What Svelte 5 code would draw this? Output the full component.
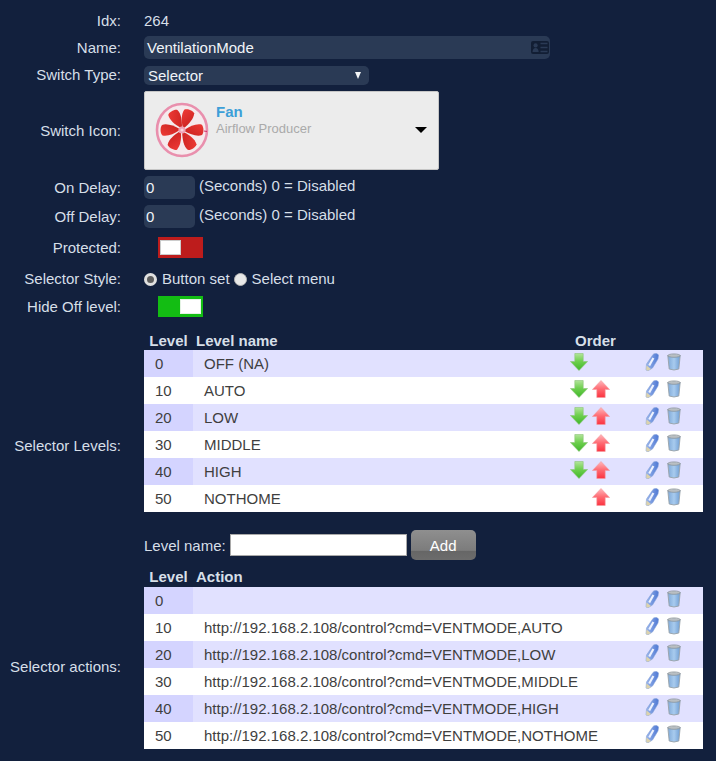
<script>
	const levels = [
		{ level: 0, name: "OFF (NA)", down: true, up: false },
		{ level: 10, name: "AUTO", down: true, up: true },
		{ level: 20, name: "LOW", down: true, up: true },
		{ level: 30, name: "MIDDLE", down: true, up: true },
		{ level: 40, name: "HIGH", down: true, up: true },
		{ level: 50, name: "NOTHOME", down: false, up: true }
	];
	const actions = [
		{ level: 0, action: "" },
		{ level: 10, action: "http://192.168.2.108/control?cmd=VENTMODE,AUTO" },
		{ level: 20, action: "http://192.168.2.108/control?cmd=VENTMODE,LOW" },
		{ level: 30, action: "http://192.168.2.108/control?cmd=VENTMODE,MIDDLE" },
		{ level: 40, action: "http://192.168.2.108/control?cmd=VENTMODE,HIGH" },
		{ level: 50, action: "http://192.168.2.108/control?cmd=VENTMODE,NOTHOME" }
	];
	const blades = [-27, 22, 90, 150, 210, 270];
</script>

{#snippet arrow(dir)}
	<svg class="arrow" class:flip={dir === "up"} width="18" height="18" viewBox="0 0 18 18">
		<path
			d="M4.8 0.5 H13.2 V8.5 H17.6 L9 17.5 L0.4 8.5 H4.8 Z"
			fill="url(#{dir === 'up' ? 'gradUp' : 'gradDown'})"
			stroke={dir === "up" ? "#f49aa0" : "#8cc478"}
			stroke-width="0.6"
		/>
	</svg>
{/snippet}

{#snippet tools()}
	<div class="tools">
		<svg class="pen" width="14" height="18" viewBox="0 0 14 18">
			<path d="M8 1.5 C9.5 0 13 0 13.5 2.5 L13 6 L7.5 15 L3 17.8 L1 17 L1.5 11 Z" fill="url(#gradPen)" stroke="#86a2d8" stroke-width="0.6" />
			<path d="M8.4 5 L4.2 12.5" stroke="#eef3ff" stroke-width="2.2" />
			<path d="M1.5 12.5 L1.2 17 L3 17.8 L6 16 Z" fill="#dcd3ae" />
		</svg>
		<svg class="bin" width="14" height="18" viewBox="0 0 14 18">
			<path d="M0.8 2.5 L13.2 2.5 L11.8 16 Q7 18 2.2 16 Z" fill="url(#gradBin)" stroke="#9aa3a8" stroke-width="0.9" />
			<ellipse cx="7" cy="2.6" rx="6.2" ry="1.7" fill="#b9bfc3" stroke="#858e93" stroke-width="0.7" />
		</svg>
	</div>
{/snippet}

<svg class="defs" width="0" height="0">
	<defs>
		<linearGradient id="gradDown" x1="0" y1="0" x2="0" y2="1">
			<stop offset="0" stop-color="#b2e49a" />
			<stop offset="0.45" stop-color="#6fd04f" />
			<stop offset="1" stop-color="#3fb62a" />
		</linearGradient>
		<linearGradient id="gradUp" x1="0" y1="1" x2="0" y2="0">
			<stop offset="0" stop-color="#ffb8bc" />
			<stop offset="0.5" stop-color="#ff6a72" />
			<stop offset="1" stop-color="#fb3340" />
		</linearGradient>
		<linearGradient id="gradPen" x1="0" y1="0" x2="1" y2="0">
			<stop offset="0" stop-color="#9db8ec" />
			<stop offset="1" stop-color="#4e78d4" />
		</linearGradient>
		<linearGradient id="gradBin" x1="0" y1="0" x2="1" y2="0">
			<stop offset="0" stop-color="#7fa9d8" />
			<stop offset="0.5" stop-color="#a8cbee" />
			<stop offset="1" stop-color="#6f9ed4" />
		</linearGradient>
		<linearGradient id="gradBlade" x1="0" y1="0" x2="1" y2="1">
			<stop offset="0" stop-color="#ee3a36" />
			<stop offset="1" stop-color="#c9211f" />
		</linearGradient>
	</defs>
</svg>

<div class="page">
	<div class="row idx">
		<div class="label">Idx:</div>
		<div class="value">264</div>
	</div>

	<div class="row name">
		<div class="label">Name:</div>
		<div class="field wide">
			VentilationMode
			<svg class="card" width="18" height="13" viewBox="0 0 18 13">
				<rect width="18" height="13" rx="2" fill="#121e34" />
				<circle cx="4.6" cy="4.4" r="2.1" fill="#2a3a55" />
				<path d="M1.5 11 Q1.8 7 4.6 7 Q7.4 7 7.7 11 Z" fill="#2a3a55" />
				<path d="M9.5 2.5 H16.5 M9.5 6.5 H16.5 M9.5 10.5 H16.5" stroke="#2a3a55" stroke-width="1.6" />
			</svg>
		</div>
	</div>

	<div class="row type">
		<div class="label">Switch Type:</div>
		<div class="field select">
			Selector
			<span class="caret"></span>
		</div>
	</div>

	<div class="row icon">
		<div class="label">Switch Icon:</div>
		<div class="iconbox">
			<svg class="fan" width="54" height="56" viewBox="-27 -28 54 56">
				<ellipse cx="0" cy="0" rx="25" ry="26" fill="#f5eaed" stroke="#e98fad" stroke-width="2.6" />
				{#each blades as b}
					<path
						transform="rotate({b})"
						d="M-0.5 -3 C-4 -8 -6.5 -14 -5.5 -19.5 C-3.5 -22 3 -22 5 -20 C7 -15 4 -8 1.5 -3 Z"
						fill="url(#gradBlade)"
					/>
				{/each}
				<path d="M22 1 L25 1.5" stroke="#d0306a" stroke-width="1.2" />
				<circle r="3.6" fill="#f0a0b4" />
				<circle r="1.6" fill="#f8d3dc" />
			</svg>
			<div class="icontext">
				<div class="iconname">Fan</div>
				<div class="icondesc">Airflow Producer</div>
			</div>
			<span class="iconcaret"></span>
		</div>
	</div>

	<div class="row delay">
		<div class="label">On Delay:</div>
		<div class="field small">0</div>
		<div class="hint">(Seconds) 0 = Disabled</div>
	</div>

	<div class="row delay">
		<div class="label">Off Delay:</div>
		<div class="field small">0</div>
		<div class="hint">(Seconds) 0 = Disabled</div>
	</div>

	<div class="row toggle-row first">
		<div class="label">Protected:</div>
		<div class="toggle off"><span class="knob"></span></div>
	</div>

	<div class="row style">
		<div class="label">Selector Style:</div>
		<div class="radios">
			<span class="radio checked"></span>
			<span>Button set</span>
			<span class="radio second"></span>
			<span>Select menu</span>
		</div>
	</div>

	<div class="row toggle-row">
		<div class="label">Hide Off level:</div>
		<div class="toggle on"><span class="knob"></span></div>
	</div>

	<div class="row tables">
		<div class="label">Selector Levels:</div>
		<div class="tablewrap">
			<div class="thead">
				<span class="c-level">Level</span>
				<span class="c-name">Level name</span>
				<span class="c-order">Order</span>
			</div>
			{#each levels as l, i}
				<div class="tr" class:odd={i % 2 === 0}>
					<div class="c-level cell">{l.level}</div>
					<div class="c-name cell">{l.name}</div>
					<div class="c-order cell">
						<span class="slot">{#if l.down}{@render arrow("down")}{/if}</span>
						<span class="slot">{#if l.up}{@render arrow("up")}{/if}</span>
					</div>
					{@render tools()}
				</div>
			{/each}
			<div class="adder">
				<span>Level name:</span>
				<div class="textbox"></div>
				<div class="btn">Add</div>
			</div>
		</div>
	</div>

	<div class="row tables">
		<div class="label">Selector actions:</div>
		<div class="tablewrap last">
			<div class="thead tall">
				<span class="c-level">Level</span>
				<span class="c-name">Action</span>
			</div>
			{#each actions as a, i}
				<div class="tr" class:odd={i % 2 === 0}>
					<div class="c-level cell">{a.level}</div>
					<div class="c-action cell">{a.action}</div>
					{@render tools()}
				</div>
			{/each}
		</div>
	</div>
</div>

<style>
	:global(body) {
		margin: 0;
		background: #12203d;
	}
	.defs {
		position: absolute;
	}
	.page {
		height: 761px;
		box-sizing: border-box;
		overflow: hidden;
		padding-top: 11px;
		font-family: "Liberation Sans", Arial, sans-serif;
		font-size: 15px;
		color: #d6dfe8;
	}
	.row {
		display: grid;
		grid-template-columns: 121px auto 1fr;
		column-gap: 23px;
		align-items: center;
	}
	.label {
		text-align: right;
	}
	.idx {
		height: 19px;
		margin-bottom: 6px;
	}
	.name {
		height: 23px;
		margin-bottom: 7px;
	}
	.type {
		height: 19px;
		margin-bottom: 6px;
	}
	.type .label {
		margin-top: -2px;
	}
	.icon {
		height: 79px;
		margin-bottom: 6px;
	}
	.delay {
		height: 23px;
		margin-bottom: 6px;
	}
	.delay .hint {
		margin-left: -19px;
		margin-top: -4px;
	}
	.field {
		box-sizing: border-box;
		background: #2a3a55;
		border-radius: 5px;
		color: #f0f4f8;
		display: flex;
		align-items: center;
		padding-left: 3px;
	}
	.wide {
		width: 406px;
		height: 23px;
		justify-content: space-between;
		padding-right: 1px;
	}
	.select {
		width: 225px;
		height: 19px;
		padding-left: 4px;
		justify-content: space-between;
		padding-right: 8px;
	}
	.caret {
		width: 0;
		height: 0;
		border-left: 3.5px solid transparent;
		border-right: 3.5px solid transparent;
		border-top: 7px solid #f4f6f8;
	}
	.small {
		width: 51px;
		height: 23px;
		padding-left: 2px;
	}
	.iconbox {
		box-sizing: border-box;
		width: 295px;
		height: 79px;
		background: #ececec;
		border: 1px solid #c6c6c6;
		border-radius: 2px;
		display: flex;
		align-items: flex-start;
		padding: 10px 12px 0 10px;
		position: relative;
	}
	.fan {
		flex: none;
	}
	.icontext {
		margin-left: 7px;
		line-height: 17px;
		margin-top: 1px;
	}
	.iconname {
		color: #3d9fd8;
		font-weight: bold;
		font-size: 15px;
	}
	.icondesc {
		color: #aaaaaa;
		font-size: 13px;
	}
	.iconcaret {
		position: absolute;
		right: 11px;
		top: 35px;
		width: 0;
		height: 0;
		border-left: 6px solid transparent;
		border-right: 6px solid transparent;
		border-top: 6px solid #000;
	}
	.toggle-row {
		height: 21px;
	}
	.first {
		margin-top: 9px;
		margin-bottom: 12px;
	}
	.toggle {
		box-sizing: border-box;
		width: 45px;
		height: 21px;
		margin-left: 14px;
		position: relative;
	}
	.toggle.off {
		background: #bd1c1c;
	}
	.toggle.on {
		background: #13bd13;
	}
	.knob {
		position: absolute;
		top: 3px;
		width: 21px;
		height: 15px;
		background: #fff;
		box-sizing: border-box;
		border: 1px solid #ccc;
	}
	.off .knob {
		left: 2px;
	}
	.on .knob {
		right: 2px;
		border-color: #e4f3e4;
	}
	.style {
		height: 17px;
		margin-bottom: 9px;
	}
	.radios {
		display: flex;
		align-items: center;
		white-space: nowrap;
		grid-column: 2 / 4;
		gap: 5px;
	}
	.radio {
		box-sizing: border-box;
		width: 13px;
		height: 13px;
		border-radius: 50%;
		background: #e8e8e8;
		border: 1px solid #b5b5b5;
		margin-top: 1px;
	}
	.radio.checked {
		background: #5d5d5d;
		border: 3px solid #e0e0e0;
	}
	.radio.second {
		margin-left: -1px;
	}
	.tables {
		grid-template-columns: 121px 559px;
	}
	.toggle-row + .tables {
		margin-top: 14px;
	}
	.tables + .tables {
		margin-top: 7px;
	}
	.tablewrap {
		width: 559px;
	}
	.tablewrap.last {
		margin-bottom: 16px;
	}
	.thead {
		display: flex;
		height: 19px;
		align-items: center;
		font-weight: bold;
		position: relative;
	}
	.thead.tall {
		height: 20px;
		padding-bottom: 1px;
		box-sizing: border-box;
	}
	.thead .c-level {
		width: 49px;
		box-sizing: border-box;
		text-align: center;
	}
	.thead .c-name {
		padding-left: 3px;
	}
	.thead .c-order {
		position: absolute;
		left: 431px;
	}
	.tr {
		display: flex;
		height: 27px;
		background: #fff;
		color: #3f3f3f;
		align-items: center;
		position: relative;
	}
	.tr.odd {
		background: #e1e1ff;
	}
	.tr.odd .c-level {
		background: #d4d4ff;
	}
	.cell {
		height: 100%;
		display: flex;
		align-items: center;
		box-sizing: border-box;
	}
	.tr .c-level {
		width: 49px;
		padding-left: 11px;
	}
	.tr .c-name {
		width: 377px;
		padding-left: 11px;
	}
	.tr .c-action {
		padding-left: 11px;
		white-space: nowrap;
	}
	.c-order {
		gap: 4px;
	}
	.slot {
		width: 18px;
		height: 18px;
		display: block;
		margin-top: -3px;
	}
	.arrow {
		display: block;
	}
	.flip {
		transform: rotate(180deg);
	}
	.tools {
		position: absolute;
		left: 501px;
		top: 3px;
		display: flex;
		gap: 8px;
	}
	.adder {
		display: flex;
		align-items: center;
		margin-top: 18px;
		height: 30px;
		white-space: nowrap;
	}
	.textbox {
		box-sizing: border-box;
		width: 177px;
		height: 22px;
		background: #fff;
		border: 1px solid #a9a9a9;
		margin-left: 4px;
	}
	.btn {
		width: 65px;
		height: 30px;
		margin-left: 4px;
		border-radius: 5px;
		background: linear-gradient(#8f8f8f, #7c7c7c 68%, #666 70%, #6c6c6c);
		color: #fff;
		display: flex;
		align-items: center;
		justify-content: center;
	}
</style>
